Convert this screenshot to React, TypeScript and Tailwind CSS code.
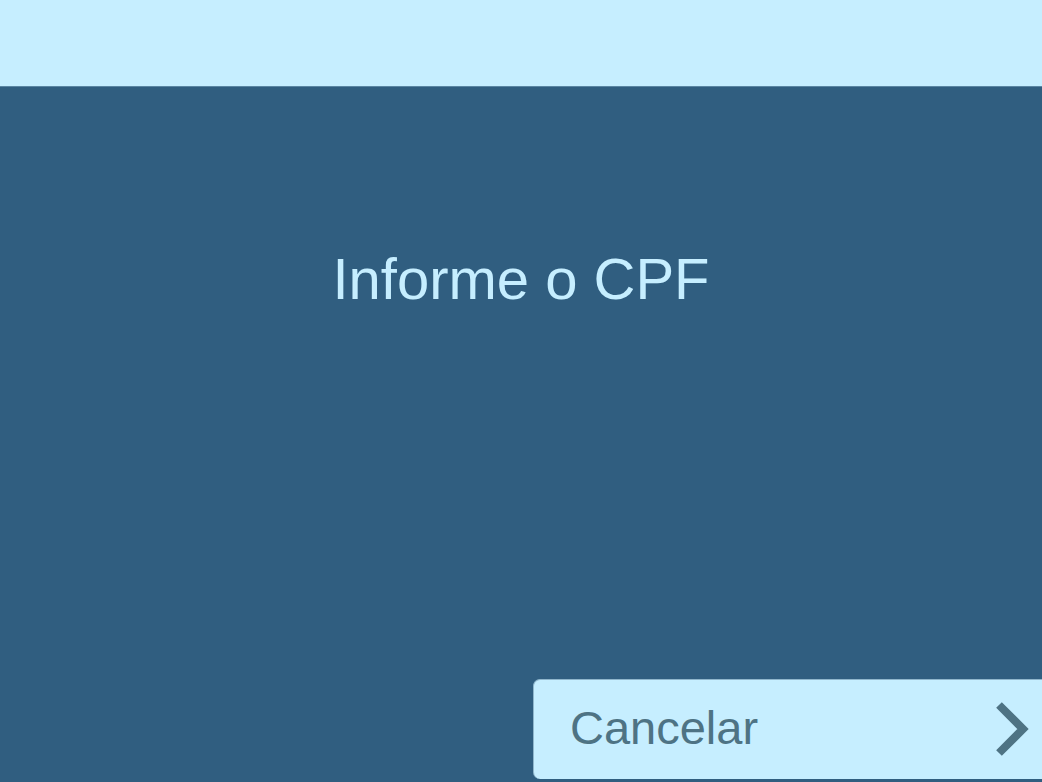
const App = () => {
  return (
    <div
      className="h-[782px] w-full flex flex-col bg-[#305e80] overflow-hidden"
      style={{ fontFamily: '"Liberation Sans", Arial, sans-serif' }}
    >
      {/* Top bar */}
      <div className="h-[87px] shrink-0 bg-[#c6eeff] border-b border-[#5a86a3]" />

      {/* Title */}
      <div className="flex-1 flex justify-center">
        <h1 className="mt-[163px] text-[58px] leading-none text-[#c6eeff] font-normal">
          Informe o CPF
        </h1>
      </div>

      {/* Cancel button */}
      <div className="flex justify-end pb-[3px]">
        <button className="w-[509px] h-[100px] bg-[#c6eeff] rounded-l-[7px] flex items-center justify-between pl-[36px] pr-[12px] border-t border-l border-[#8fb6cc]">
          <span className="text-[47px] leading-none text-[#4e7384] -mt-[4px]">Cancelar</span>
          <svg width="36" height="58" viewBox="0 0 36 58" className="-mt-[2px]">
            <polyline
              points="5,5 29,29 5,53"
              fill="none"
              stroke="#4e7384"
              strokeWidth="8"
              strokeLinecap="butt"
              strokeLinejoin="miter"
            />
          </svg>
        </button>
      </div>
    </div>
  );
};

export default App;
